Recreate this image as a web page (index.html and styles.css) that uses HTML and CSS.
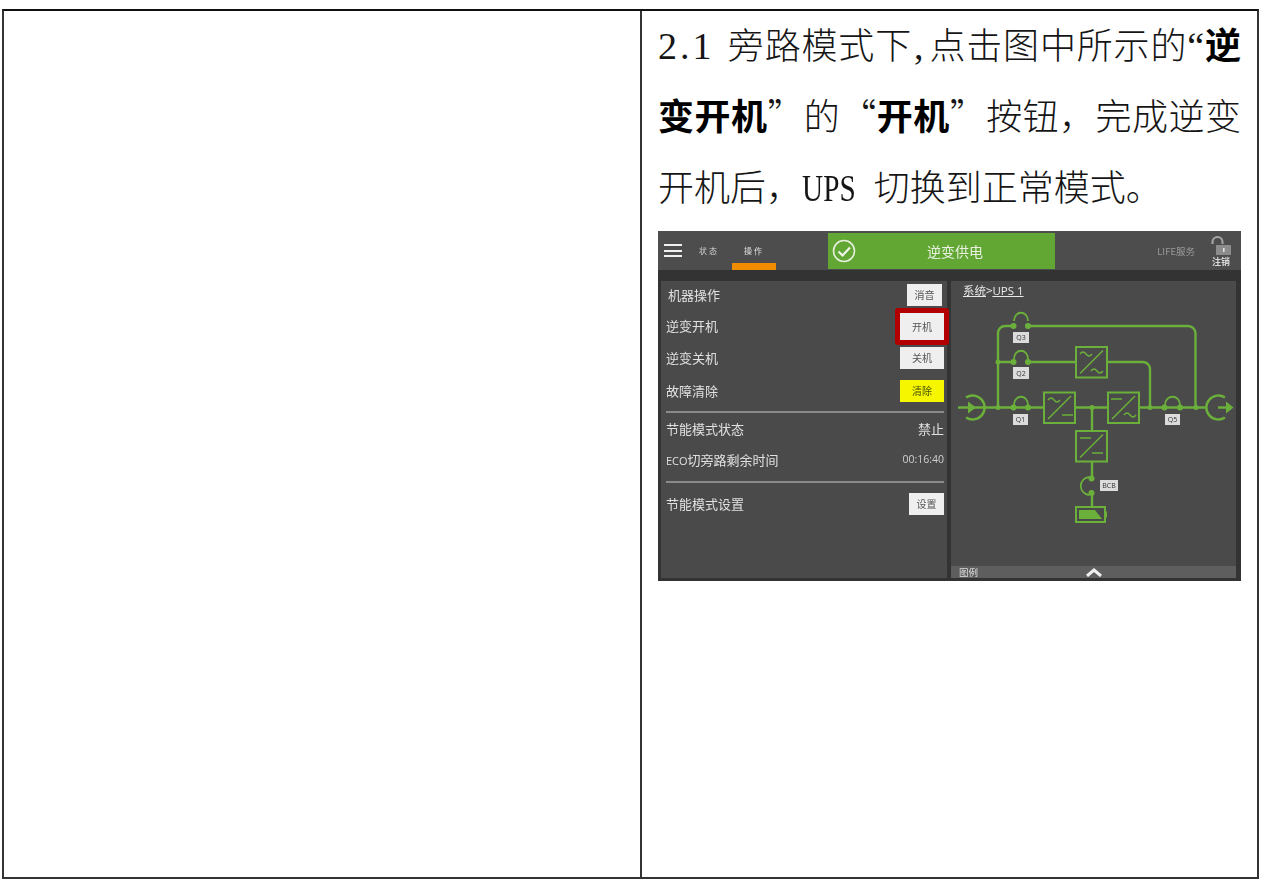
FILE: index.html
```html
<!DOCTYPE html>
<html lang="zh-CN">
<head>
    <meta charset="UTF-8">
    <meta name="viewport" content="width=device-width, initial-scale=1.0">
    <title>逆变开机</title>
    <link rel="stylesheet" href="styles.css">
</head>
<body>

<div class="sheet">
    <div class="cell-empty"></div>
    <div class="cell-main">
        <p class="line justify"><span class="latin latin-num">2.1 </span>旁路模式下<span class="latin latin-comma">,</span>点击图中所示的<span class="latin">“</span><b>逆</b></p>
        <p class="line justify"><b>变开机</b>”的“<b>开机</b>”按钮，完成逆变</p>
        <p class="line">开机后，<span class="latin latin-ups">UPS</span><span class="latin-gap"></span>切换到正常模式。</p>

        <div class="shot">
            <div class="topbar">
                <div class="burger"><i></i><i></i><i></i></div>
                <div class="tab">状态</div>
                <div class="tab tab-on">操作</div>
                <div class="status">
                    <svg class="status-icon" width="24" height="24" viewBox="0 0 24 24">
                        <circle cx="12" cy="12" r="10.5" fill="none" stroke="#e6efdc" stroke-width="1.6"/>
                        <path d="M6.5 12.5l4 4 7.5-8" fill="none" stroke="#f2f6ec" stroke-width="2.2"/>
                    </svg>
                    <span class="status-text">逆变供电</span>
                </div>
                <div class="life">LIFE服务</div>
                <div class="logout">
                    <svg width="22" height="20" viewBox="0 0 22 20">
                        <path d="M2.5 8V6a5 5 0 0 1 10 0v2" fill="none" stroke="#a8a8a8" stroke-width="2"/>
                        <rect x="6" y="9" width="15" height="10" fill="#8c8c8c"/>
                        <rect x="13" y="12" width="1.6" height="4" fill="#e0e0e0"/>
                    </svg>
                    <span>注销</span>
                </div>
            </div>
            <div class="strip"></div>
            <div class="panels">
                <div class="panel-left">
                    <div class="row row-first">
                        <span class="row-title">机器操作</span>
                        <span class="btn btn-mute">消音</span>
                    </div>
                    <div class="row row-ring">
                        <span>逆变开机</span>
                        <span class="ring"><span class="btn btn-on">开机</span></span>
                    </div>
                    <div class="row">
                        <span>逆变关机</span>
                        <span class="btn">关机</span>
                    </div>
                    <div class="row row-gap">
                        <span>故障清除</span>
                        <span class="btn btn-yellow">清除</span>
                    </div>
                    <div class="rule rule-one"></div>
                    <div class="row row-info">
                        <span>节能模式状态</span>
                        <span class="row-value">禁止</span>
                    </div>
                    <div class="row row-info row-eco">
                        <span><span class="ui-latin eco">ECO</span>切旁路剩余时间</span>
                        <span class="time">00:16:40</span>
                    </div>
                    <div class="rule rule-two"></div>
                    <div class="row row-set">
                        <span>节能模式设置</span>
                        <span class="btn btn-set">设置</span>
                    </div>
                </div>

                <div class="panel-right">
                    <div class="crumb"><u>系统</u>&gt;<u class="ui-latin">UPS 1</u></div>
                    <svg class="diagram" width="285" height="265" viewBox="951 301 285 265">
                        <g fill="none" stroke="#6bb03a" stroke-width="2.400">
                            <!-- power lines -->
                            <path d="M958 407.500H1044M1076 407.500H1108M1139 407.500H1206M1218 407.500H1228"/>
                            <path d="M998 407V333a7 7 0 0 1 7-7h8.500M1028 326H1188a7.500 7.500 0 0 1 7.500 7.500V407"/>
                            <path d="M998 362H1013.500M1028 362H1076M1107 362H1143a7 7 0 0 1 7 7V407"/>
                            <path d="M1092 407V431M1092 461V478M1092 493V507"/>
                            <!-- breakers -->
                            <path stroke-width="1.800" d="M1014 321C1014 310 1028 310 1028 321M1014 359C1014 348 1028 348 1028 359M1014 405C1014 394 1028 394 1028 405M1165 405C1165 394 1180 394 1180 405"/>
                            <path stroke-width="1.800" d="M1089 477C1078 479 1078 493 1089 495"/>
                            <!-- in / out -->
                            <path d="M966 397.500A12 12 0 1 1 966 417.500"/>
                            <path d="M1225 397.500A12 12 0 1 0 1225 417.500"/>
                            <!-- converter boxes -->
                            <g stroke-width="2">
                                <rect x="1044" y="392.500" width="31" height="30.500"/>
                                <rect x="1108" y="392.500" width="31" height="30.500"/>
                                <rect x="1076" y="347" width="31" height="30.500"/>
                                <rect x="1076" y="431" width="31" height="30.500"/>
                                <rect x="1076" y="507" width="29" height="15"/>
                            </g>
                            <path d="M1048 419l23-23M1112 419l23-23M1080 373.500l23-23M1080 457.500l23-23" stroke-width="1.500"/>
                            <path d="M1048 400q3-4 6 0t6 0M1124 415q3-4 6 0t6 0M1080 354q3-4 6 0t6 0M1091 371q3-4 6 0t6 0" stroke-width="1.300"/>
                            <path d="M1062 415h11M1111 399h11M1080 438h11M1092 453h11" stroke-width="1.300"/>
                        </g>
                        <g fill="#6bb03a">
                            <circle cx="998" cy="407.500" r="2.500"/>
                            <circle cx="998" cy="362" r="2.500"/>
                            <circle cx="1092" cy="407.500" r="2.500"/>
                            <circle cx="1150" cy="407.500" r="2.500"/>
                            <circle cx="1196" cy="407.500" r="2.500"/>
                            <circle cx="1013.500" cy="326" r="3"/>
                            <circle cx="1028" cy="326" r="3"/>
                            <circle cx="1013.500" cy="362" r="3"/>
                            <circle cx="1028" cy="362" r="3"/>
                            <circle cx="1013.500" cy="407.500" r="3"/>
                            <circle cx="1028" cy="407.500" r="3"/>
                            <circle cx="1164.500" cy="407.500" r="3"/>
                            <circle cx="1180" cy="407.500" r="3"/>
                            <circle cx="1091.500" cy="478.500" r="3"/>
                            <circle cx="1091.500" cy="493" r="3"/>
                            <path d="M968 401.500l8 6-8 6zM1226 401.500l7.500 6-7.500 6z"/>
                            <path d="M1079 510h16l7 9h-23z"/>
                            <rect x="1105" y="511.500" width="2" height="6"/>
                        </g>
                        <g class="tags">
                            <rect x="1013" y="332" width="16" height="11"/>
                            <rect x="1013" y="367" width="16" height="12"/>
                            <rect x="1013" y="414" width="15" height="11"/>
                            <rect x="1165" y="414" width="15" height="11"/>
                            <rect x="1100" y="480" width="18" height="11"/>
                        </g>
                        <g class="tag-text">
                            <text x="1021" y="340">Q3</text>
                            <text x="1021" y="376">Q2</text>
                            <text x="1020.500" y="422">Q1</text>
                            <text x="1172.500" y="422">Q5</text>
                            <text x="1109" y="488">BCB</text>
                        </g>
                    </svg>
                    <div class="legend">
                        <span class="legend-text">图例</span>
                        <svg class="legend-arrow" width="16" height="9" viewBox="0 0 16 9">
                            <path d="M1 8l7-6 7 6" fill="none" stroke="#eeeeee" stroke-width="3"/>
                        </svg>
                    </div>
                </div>
            </div>
        </div>
    </div>
</div>

</body>
</html>
```

FILE: styles.css
```css
body {
    margin: 0;
    background: #fff;
    font-family: "Noto Sans CJK SC", sans-serif;
}
.sheet {
    display: flex;
    box-sizing: border-box;
    width: 1257px;
    height: 870px;
    margin: 9px 0 0 2px;
    border: 2px solid #333;
    border-top-color: #111;
}
.cell-empty {
    width: 636px;
    border-right: 2px solid #333;
}
.cell-main {
    width: 583px;
    margin-top: -3px;
    padding: 0 16px;
    color: #151515;
}
.line {
    margin: 0;
    height: 71px;
    font-size: 36px;
    line-height: 71px;
    font-weight: 300;
    white-space: nowrap;
}
.justify {
    white-space: normal;
    text-align: justify;
    text-align-last: justify;
}
.line b {
    font-weight: 700;
    color: #000;
}
.latin {
    font-family: "Liberation Serif", serif;
    font-size: 38px;
    font-weight: 400;
}
.latin-num {
    letter-spacing: 3px;
}
.latin-comma {
    margin: 0 5px 0 2px;
}
/* narrow half-width capitals, as in the original Song face */
.latin-ups {
    display: inline-block;
    margin-right: -16px;
    transform: scaleX(0.77);
    transform-origin: left;
}
.latin-gap {
    display: inline-block;
    width: 18px;
}

/* the embedded panel photo */
.shot {
    display: flex;
    flex-direction: column;
    width: 583px;
    height: 350px;
    margin-top: 10px;
    background: #333;
    color: #e0e0e0;
    font-size: 12px;
    filter: blur(0.4px);
}
.topbar {
    display: flex;
    height: 39px;
    padding-left: 6px;
    background: #4d4d4d;
}
.burger {
    display: flex;
    flex-direction: column;
    justify-content: space-between;
    width: 18px;
    height: 13px;
    margin: 13px 5px 0 0;
}
.burger i {
    height: 2px;
    background: #f0f0f0;
}
.tab {
    box-sizing: border-box;
    width: 44px;
    height: 39px;
    margin-right: 1px;
    padding-top: 13px;
    font-size: 8px;
    line-height: 14px;
    letter-spacing: 2px;
    text-align: center;
    color: #d0d0d0;
}
.tab-on {
    border-bottom: 7px solid #f08c00;
    color: #e0e0e0;
}
.status {
    display: flex;
    align-items: center;
    width: 227px;
    height: 36px;
    margin: 2px 0 0 51px;
    padding-left: 4px;
    box-sizing: border-box;
    background: #62a734;
}
.status-text {
    margin-left: 71px;
    font-size: 14px;
    color: #e8f0e0;
}
.life {
    margin: 13px 0 0 auto;
    font-size: 9.500px;
    line-height: 14px;
    color: #9a9a9a;
}
.logout {
    display: flex;
    flex-direction: column;
    align-items: center;
    width: 24px;
    margin: 5px 8px 0 14px;
    font-size: 9px;
    line-height: 11px;
    font-weight: 700;
    color: #d8d8d8;
}
.strip {
    height: 11px;
    background: #333;
}
.panels {
    display: flex;
    gap: 4px;
    height: 297px;
    padding-left: 3px;
}
.panel-left {
    box-sizing: border-box;
    width: 286px;
    height: 297px;
    padding: 3px 3px 0 5px;
    background: #4a4a4a;
}
.row {
    display: flex;
    justify-content: space-between;
    align-items: center;
    height: 22px;
    font-size: 13px;
}
.row > span:first-child,
.row-value {
    margin-top: -2px;
}
.row-first {
    padding-left: 2px;
}
.row-first .btn {
    width: 35px;
    margin-right: 2px;
}
.row-ring {
    height: 41px;
}
.row-gap {
    margin-top: 11px;
}
.row-info {
    height: 32px;
}
.row-eco {
    height: 31px;
}
.row-set {
    margin-top: 10px;
}
.btn {
    display: block;
    box-sizing: border-box;
    width: 44px;
    height: 22px;
    background: #efefef;
    color: #555;
    font-size: 10px;
    line-height: 22px;
    text-align: center;
}
.btn-yellow {
    background: #f6f600;
    color: #445000;
}
.btn-set {
    width: 35px;
}
.ring {
    display: block;
    margin-right: -5px;
    padding: 5px;
    border-radius: 3px;
    background: #b20000;
}
.btn-on {
    width: 44px;
    height: 27px;
    line-height: 27px;
}
.rule {
    height: 2px;
    background: #8a8a8a;
}
.rule-one {
    margin-top: 9px;
}
.rule-two {
    margin-top: 5px;
}
.ui-latin {
    font-family: "Open Sans", sans-serif;
}
.eco {
    font-size: 11px;
}
.time {
    margin-top: -4px;
    font-family: "Open Sans", sans-serif;
    font-size: 10.500px;
    color: #cfcfcf;
}
.panel-right {
    display: flex;
    flex-direction: column;
    width: 285px;
    height: 297px;
    background: #4a4a4a;
}
.crumb {
    height: 20px;
    padding-left: 12px;
    font-size: 11.500px;
    line-height: 18px;
    color: #e8e8e8;
}
.diagram {
    display: block;
}
.tags rect {
    fill: #dcdcdc;
}
.tag-text text {
    font-family: "Open Sans", sans-serif;
    font-size: 7px;
    text-anchor: middle;
    fill: #333;
}
.legend {
    display: flex;
    align-items: center;
    height: 12px;
    padding-left: 8px;
    background: #5e5e5e;
}
.legend-text {
    font-size: 9.500px;
    line-height: 12px;
    color: #dcdcdc;
}
.legend-arrow {
    margin-left: 108px;
}
```
